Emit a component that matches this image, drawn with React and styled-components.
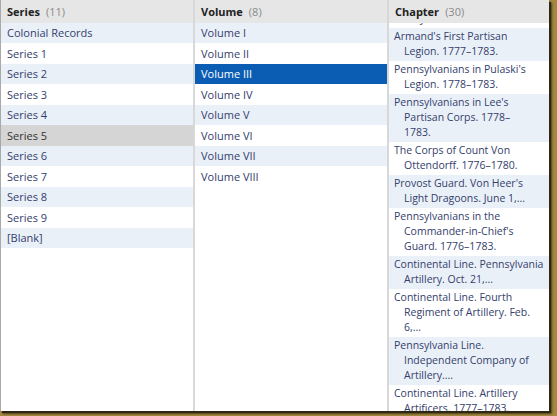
import React, { useLayoutEffect, useRef } from 'react';
import styled, { createGlobalStyle } from 'styled-components';

const GlobalStyle = createGlobalStyle`
  html, body {
    margin: 0;
    padding: 0;
    background: #a2893f;
  }
  body {
    width: 557px;
    height: 416px;
    overflow: hidden;
    font-family: "Open Sans", "Liberation Sans", sans-serif;
  }
`;

const Frame = styled.div`
  display: flex;
  width: 548px;
  height: 411px;
  background: #fff;
  border-left: 1px solid #a9a9a9;
  box-shadow: 2px 2px 1px #2e2714, 3px 3px 2px rgba(40, 30, 10, 0.6);
  overflow: hidden;
`;

const Column = styled.section`
  display: flex;
  flex-direction: column;
  flex: 0 0 ${(p) => p.width}px;
  min-width: 0;
  border-right: ${(p) => (p.last ? 'none' : '2px solid #d8d8d8')};
`;

const Header = styled.header`
  flex: 0 0 auto;
  height: 22.5px;
  display: flex;
  align-items: center;
  padding: 0 6px;
  background: #e6e6e6;
  font-size: 11px;
  font-weight: 700;
  color: #222;
  span {
    font-weight: 400;
    color: #8a8a8a;
    margin-left: 6px;
  }
`;

const List = styled.ul`
  flex: 1 1 auto;
  margin: 0;
  padding: 0;
  list-style: none;
  overflow: hidden;
`;

const Row = styled.li`
  height: 20.5px;
  display: flex;
  align-items: center;
  padding: 0 6px;
  font-size: 11px;
  white-space: nowrap;
  color: ${(p) => (p.selected ? '#fff' : p.hover ? '#333' : '#34406c')};
  background: ${(p) =>
    p.selected ? '#0b5db3' : p.hover ? '#d5d5d5' : p.index % 2 === 0 ? '#eaf0f8' : '#fff'};
`;

const ChapterRow = styled.li`
  padding: 1.5px 4px 1.5px 15px;
  text-indent: -10px;
  white-space: pre-line;
  font-size: 10.5px;
  line-height: 15px;
  color: #34406c;
  background: ${(p) => (p.index % 2 === 0 ? '#eaf0f8' : '#fff')};
`;

const series = ['Colonial Records', 'Series 1', 'Series 2', 'Series 3', 'Series 4', 'Series 5',
  'Series 6', 'Series 7', 'Series 8', 'Series 9', '[Blank]'];

const volumes = ['Volume I', 'Volume II', 'Volume III', 'Volume IV', 'Volume V', 'Volume VI',
  'Volume VII', 'Volume VIII'];

// the list wraps these itself, except where the original breaks early
const chapters = [
  'Continental Line. Regiments of Foot. 1775–1783.',
  'Fourth Continental Light Dragoons. Col. Stephen Moylan....',
  "Armand's First Partisan Legion. 1777–1783.",
  "Pennsylvanians in Pulaski's Legion. 1778–1783.",
  "Pennsylvanians in Lee's Partisan Corps. 1778–\n1783.",
  'The Corps of Count Von Ottendorff. 1776–1780.',
  "Provost Guard. Von Heer's Light Dragoons. June 1,...",
  "Pennsylvanians in the Commander-in-Chief's Guard. 1776–1783.",
  'Continental Line. Pennsylvania Artillery. Oct. 21,...',
  'Continental Line. Fourth Regiment of Artillery. Feb. 6,...',
  'Pennsylvania Line. Independent Company of Artillery....',
  'Continental Line. Artillery Artificers. 1777–1783.',
  'Invalid Regiment. 1777–1783.',
  'Miscellaneous Rolls. 1776–1783.',
];

const FIRST_VISIBLE = 2;

export default function App() {
  const chapterList = useRef(null);

  useLayoutEffect(() => {
    const list = chapterList.current;
    if (!list) return;
    const item = list.children[FIRST_VISIBLE];
    list.scrollTop = item.offsetTop - list.offsetTop - 5;
  }, []);

  return (
    <>
      <GlobalStyle />
      <Frame>
        <Column width={192}>
          <Header>Series<span>(11)</span></Header>
          <List>
            {series.map((s, i) => (
              <Row key={s} index={i} hover={s === 'Series 5'}>{s}</Row>
            ))}
          </List>
        </Column>
        <Column width={192}>
          <Header>Volume<span>(8)</span></Header>
          <List>
            {volumes.map((v, i) => (
              <Row key={v} index={i} selected={v === 'Volume III'}>{v}</Row>
            ))}
          </List>
        </Column>
        <Column width={160} last>
          <Header>Chapter<span>(30)</span></Header>
          <List ref={chapterList}>
            {chapters.map((c, i) => (
              <ChapterRow key={c} index={i}>{c}</ChapterRow>
            ))}
          </List>
        </Column>
      </Frame>
    </>
  );
}
